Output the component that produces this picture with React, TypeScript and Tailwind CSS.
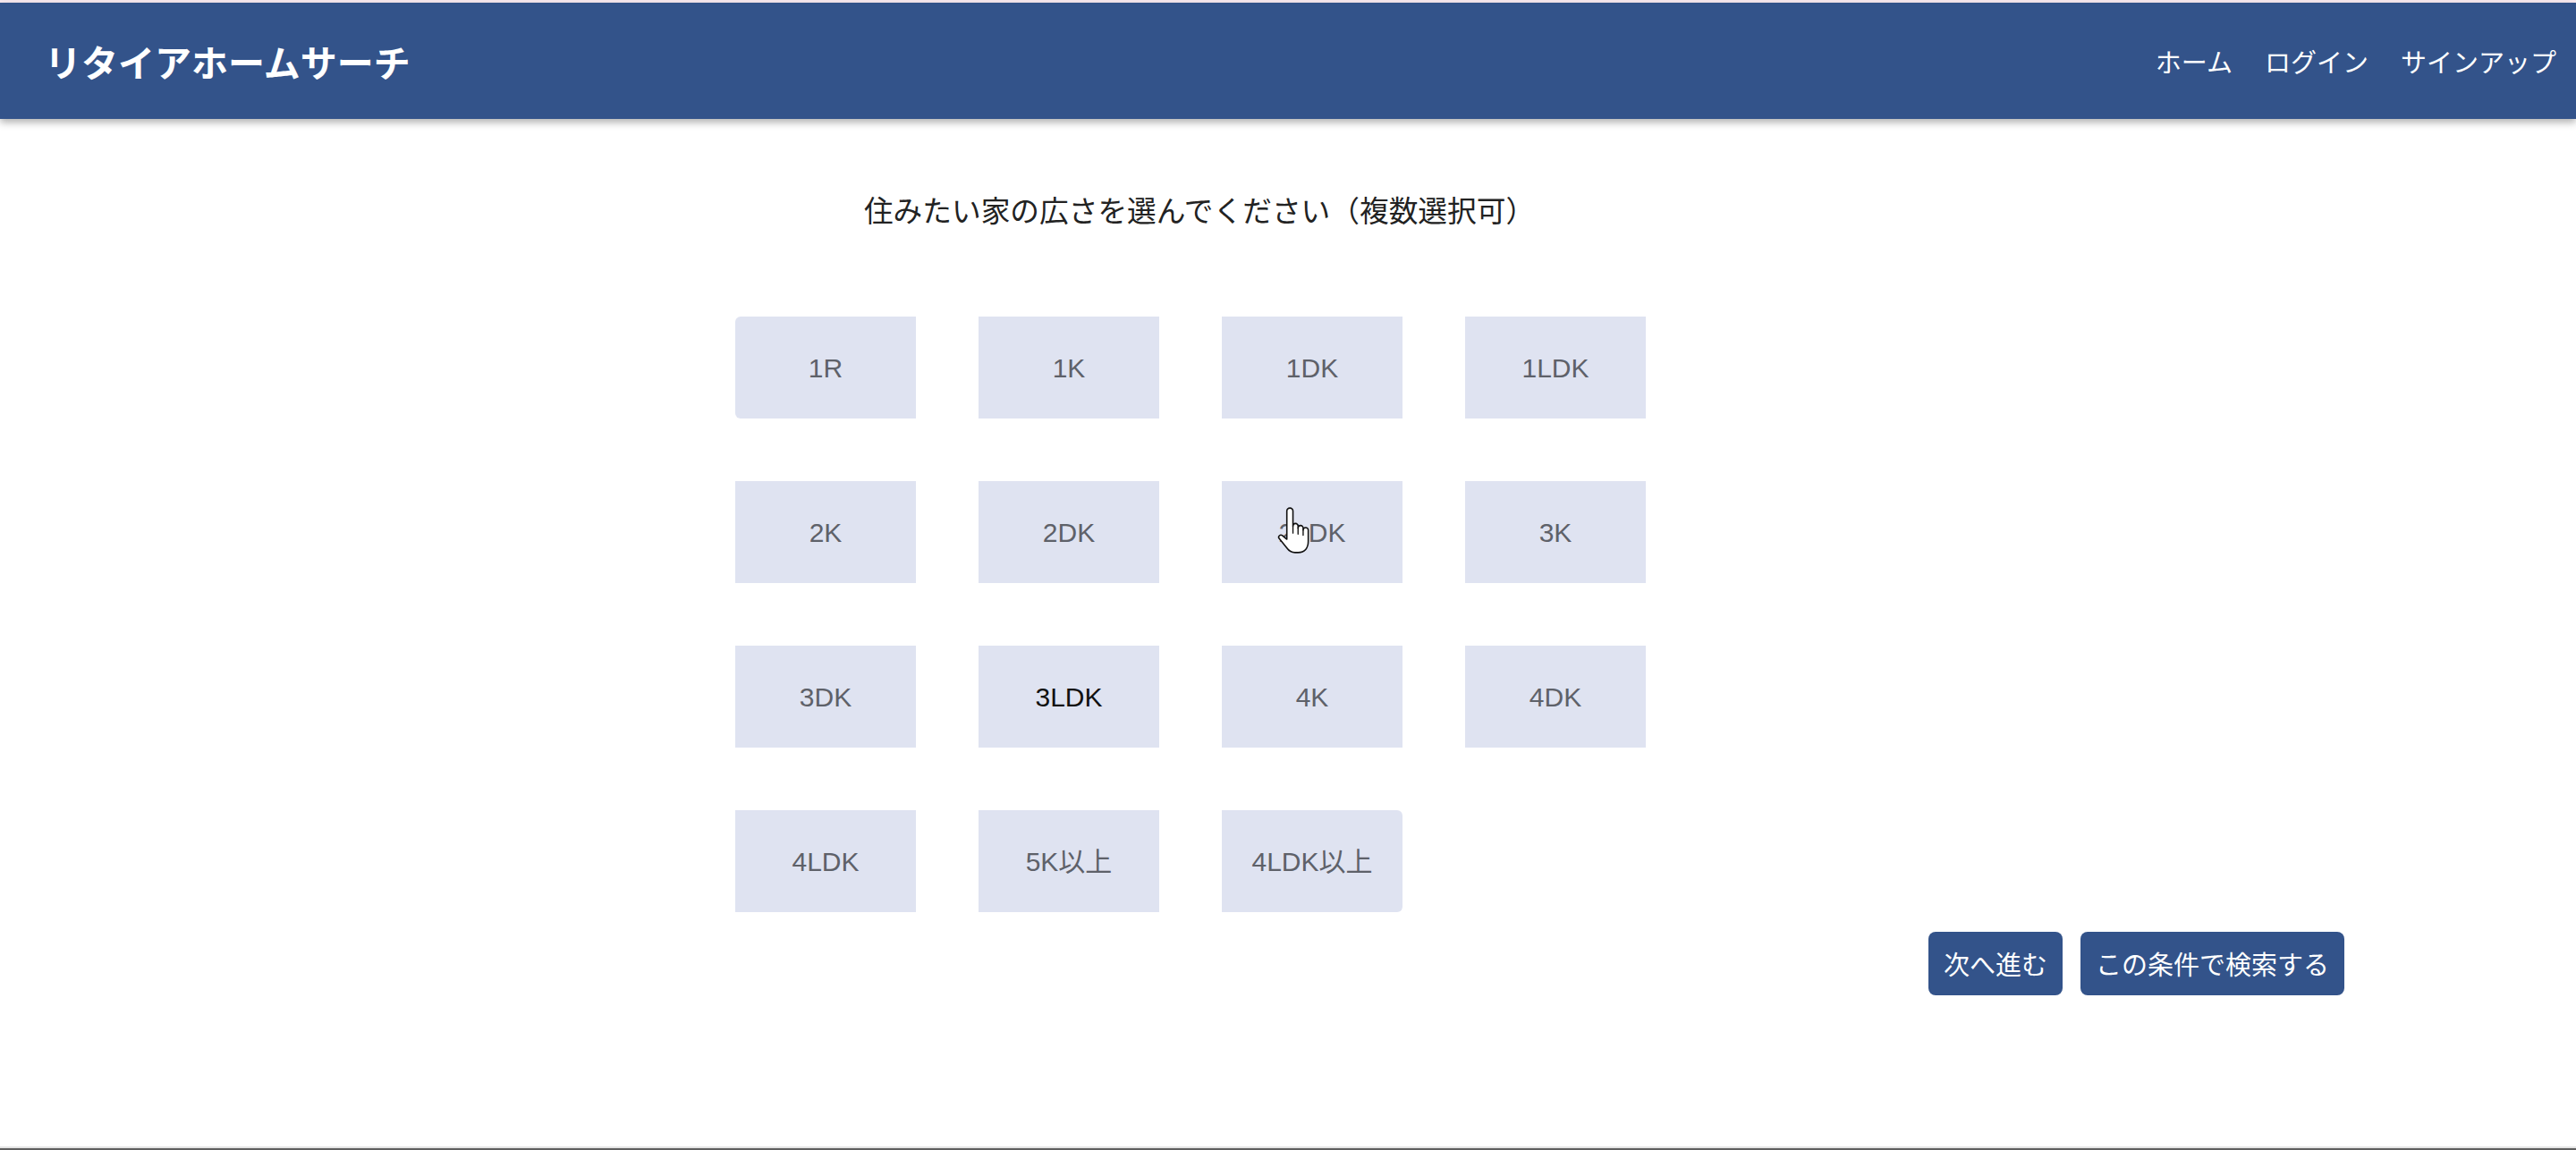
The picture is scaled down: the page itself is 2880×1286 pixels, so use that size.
import React from "react";

const items = [
  "1R", "1K", "1DK", "1LDK",
  "2K", "2DK", "2LDK", "3K",
  "3DK", "3LDK", "4K", "4DK",
  "4LDK", "5K以上", "4LDK以上",
];

const jp = { fontFamily: '"Noto Sans CJK JP", "Noto Sans", sans-serif' };
const lat = { fontFamily: '"Liberation Sans", "Noto Sans CJK JP", sans-serif' };

function HandCursor() {
  return (
    <svg
      width="36"
      height="52"
      viewBox="0.3 0.2 15.8 22.8"
      className="absolute left-[1428px] top-[567px] pointer-events-none"
    >
      <path
        d="M5 2.2a1.5 1.5 0 0 1 3 0V9.5a1.25 1.25 0 0 1 2.5 0V10.5a1.25 1.25 0 0 1 2.5 0V11.5a1.25 1.25 0 0 1 2.5 0V17c0 3-1.5 5.5-5 5.5h-1.5c-2 0-3-0.8-4-2.2L1.2 15.6c-0.7-1 0.6-2.2 1.6-1.4L5 16Z"
        fill="#fff"
        stroke="#111"
        strokeWidth="0.7"
        strokeLinejoin="round"
      />
      <path d="M8 9.5V13M10.5 10.5V13.5M13 11.5V14" stroke="#111" strokeWidth="0.6" strokeLinecap="round" />
    </svg>
  );
}

export default function App() {
  return (
    <div className="relative h-[1286px] flex flex-col bg-white overflow-hidden">
      <div className="h-[3px] bg-[#f8e9ef]" />
      <header className="h-[130px] bg-[#33538a] flex items-center justify-between pl-[50px] pr-[22px] shadow-[0_4px_8px_rgba(0,0,0,0.3)] relative z-10">
        <div style={jp} className="text-white text-[41px] font-bold leading-none">
          リタイアホームサーチ
        </div>
        <nav style={jp} className="flex items-center gap-[36px] text-white text-[29px] leading-none">
          <span>ホーム</span>
          <span>ログイン</span>
          <span>サインアップ</span>
        </nav>
      </header>
      <main className="ml-[41px] w-[2580px] flex flex-col items-center">
        <h1 style={jp} className="mt-[77px] pl-[20px] text-[32.7px] leading-[48px] text-[#222] font-normal">
          住みたい家の広さを選んでください（複数選択可）
        </h1>
        <div className="mt-[96px] grid grid-cols-[repeat(4,202px)] gap-x-[70px] gap-y-[70px]">
          {items.map((t, i) => (
            <button
              key={t}
              style={lat}
              className={
                "h-[114px] bg-[#dfe3f1] text-[30px] flex items-center justify-center " +
                (t === "3LDK" ? "text-[#111] " : "text-[#5e6169] ") +
                (i === 0 ? "rounded-l-[6px] " : "") +
                (i === items.length - 1 ? "rounded-r-[6px] " : "")
              }
            >
              {t}
            </button>
          ))}
        </div>
        <div className="self-end mt-[22px] flex gap-[20px]">
          <button style={jp} className="h-[71px] px-[17px] rounded-[8px] bg-[#33538a] text-white text-[29px]">
            次へ進む
          </button>
          <button style={jp} className="h-[71px] px-[17px] rounded-[8px] bg-[#33538a] text-white text-[29px]">
            この条件で検索する
          </button>
        </div>
      </main>
      <div className="mt-auto h-[2px] bg-[#e4e4e4]" />
      <div className="h-[2px] bg-[#5f5f5f]" />
      <HandCursor />
    </div>
  );
}
